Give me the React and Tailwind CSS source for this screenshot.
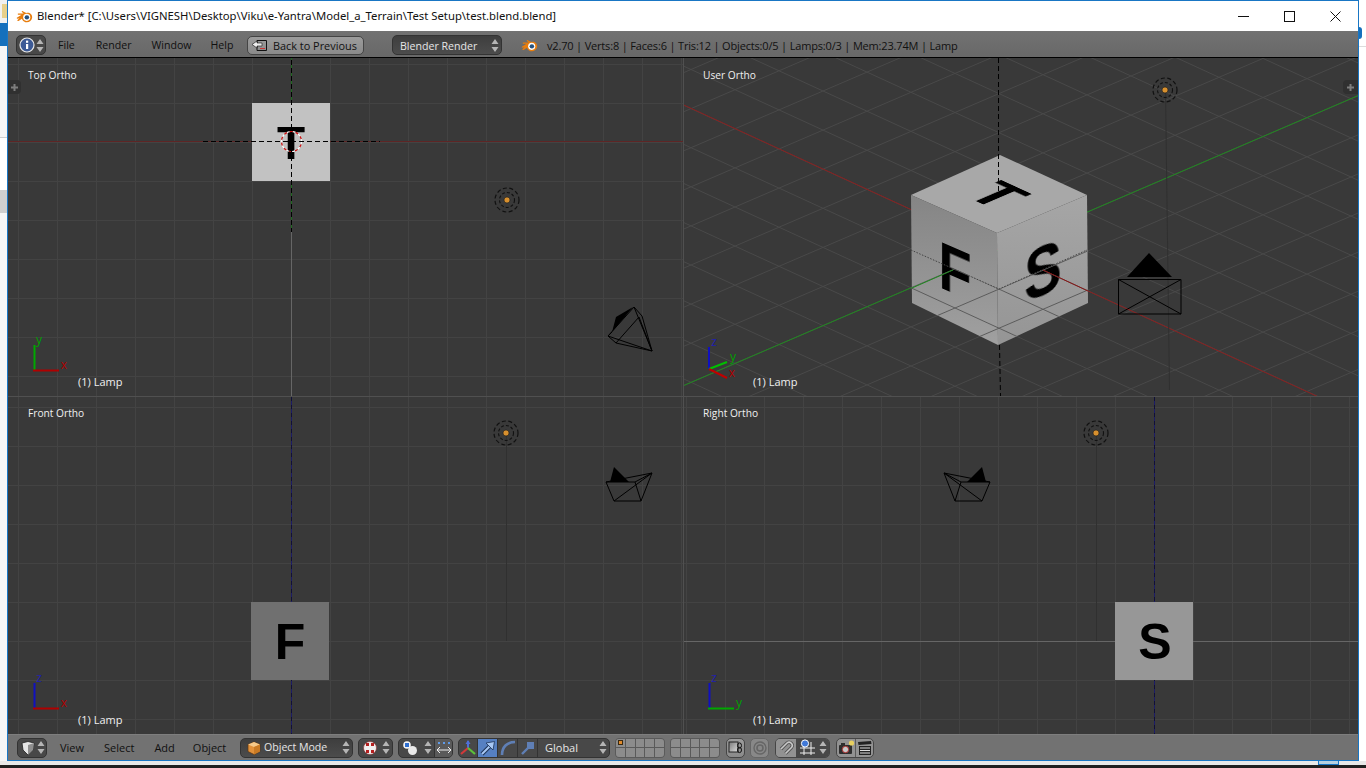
import React from "react";

const uiFont = { fontFamily: '"Open Sans", "Noto Sans", sans-serif' };

function UpDown({ color = "#b5b5b5" }) {
  return (
    <svg width="8" height="15" viewBox="0 0 8 15" className="shrink-0">
      <path d="M4 1 L7.5 6 H0.5 Z M4 14 L7.5 9 H0.5 Z" fill={color} />
    </svg>
  );
}

function BlenderLogo({ size = 16 }) {
  return (
    <svg width={size} height={size} viewBox="0 0 20 20" className="shrink-0">
      <path
        d="M1 11.5 L6.5 7.8 L2.5 7.8 C1.7 7.6 1.8 6.6 2.6 6.5 L9 6.4 L7 4.8 C6.4 4 7.2 3.2 8 3.7 L12 6 C15.5 4.8 19.5 7.5 19 11.5 C18.5 16 13 18.2 9.5 15.8 C8.2 15 7.3 13.8 7 12.6 L3 15.2 C2.2 15.8 1.2 15 1.8 14.2 L4 12.2 L1.8 12.6 C1 12.8 0.6 12 1 11.5 Z"
        fill="#e87d0d"
      />
      <circle cx="12.6" cy="11" r="4.2" fill="#fff" />
      <circle cx="12.8" cy="11" r="2.6" fill="#26527f" />
    </svg>
  );
}

function InfoIcon() {
  return (
    <svg width="16" height="16" viewBox="0 0 16 16" className="shrink-0">
      <circle cx="8" cy="8" r="7" fill="#3c5a96" stroke="#e8e8e8" strokeWidth="1.2" />
      <rect x="7" y="7" width="2.2" height="5" fill="#fff" />
      <rect x="7" y="3.6" width="2.2" height="2.2" fill="#fff" />
    </svg>
  );
}

function ViewCubeIcon() {
  return (
    <svg width="16" height="16" viewBox="0 0 16 16" className="shrink-0">
      <path d="M2 3 L8 1.5 L14 3 L13 10 L8 15 L3 10 Z" fill="#e6e6e6" stroke="#222" strokeWidth="0.8" />
      <path d="M8 5 L14 3 L13 10 L8 15 Z" fill="#8f8f8f" />
    </svg>
  );
}

function ObjectIcon() {
  return (
    <svg width="14" height="14" viewBox="0 0 14 14" className="shrink-0">
      <path d="M7 1 L13 3.5 V10.5 L7 13.5 L1 10.5 V3.5 Z" fill="#e2913a" stroke="#5b3510" strokeWidth="0.7" />
      <path d="M1 3.5 L7 6 L13 3.5 L7 1 Z" fill="#f5c98a" />
      <path d="M7 6 V13.5 L13 10.5 V3.5 Z" fill="#c97a24" />
    </svg>
  );
}

function ShadingIcon() {
  return (
    <svg width="14" height="14" viewBox="0 0 14 14" className="shrink-0">
      <circle cx="7" cy="7" r="6.5" fill="#f0f0f0" />
      <path d="M3 2 H6 V5 H3 Z M8 2 H11 V5 H8 Z M3 9 H6 V12 H3 Z M8 9 H11 V12 H8 Z" fill="#b51f1f" />
      <circle cx="7" cy="7" r="6.5" fill="none" stroke="#8a2a2a" strokeWidth="0.6" />
    </svg>
  );
}

function PivotIcon() {
  return (
    <svg width="16" height="16" viewBox="0 0 16 16" className="shrink-0">
      <circle cx="10.5" cy="10.5" r="4.5" fill="#eaeaea" />
      <circle cx="5" cy="5" r="3.8" fill="#f4f4f4" />
      <rect x="3" y="3" width="4" height="4" fill="#2f6fd0" />
    </svg>
  );
}

function ManipAxes() {
  return (
    <svg width="18" height="18" viewBox="0 0 18 18">
      <path d="M9 9 V2" stroke="#4f6fd8" strokeWidth="2" />
      <path d="M9 9 L2 15" stroke="#d13a3a" strokeWidth="2.2" />
      <path d="M9 9 L16 15" stroke="#5cc23a" strokeWidth="2.2" />
      <path d="M9 1 L6.5 5 H11.5 Z" fill="#4f6fd8" />
    </svg>
  );
}

function ManipMove() {
  return (
    <svg width="18" height="18" viewBox="0 0 18 18">
      <path d="M3 15 L11 7" stroke="#1d3358" strokeWidth="4" />
      <path d="M3 15 L11 7" stroke="#a8c8f5" strokeWidth="2" />
      <path d="M15.5 2.5 L14 11 L7 4 Z" fill="#a8c8f5" stroke="#1d3358" strokeWidth="0.8" />
    </svg>
  );
}

function ManipRotate() {
  return (
    <svg width="18" height="18" viewBox="0 0 18 18">
      <path d="M3 16 C3 8 8 3 16 3" stroke="#5f7fb5" strokeWidth="2.6" fill="none" />
    </svg>
  );
}

function ManipScale() {
  return (
    <svg width="18" height="18" viewBox="0 0 18 18">
      <path d="M3 15 L10 8" stroke="#5f7fb5" strokeWidth="2.4" />
      <rect x="8" y="3" width="7" height="7" fill="#5f7fb5" />
    </svg>
  );
}

function MenuItems({ items, width, textClass }) {
  return (
    <div className={`flex items-center h-full ${width}`}>
      {items.map((m) => (
        <span key={m.t} className={`${textClass} text-[#101010] leading-none ${m.ml}`}>
          {m.t}
        </span>
      ))}
    </div>
  );
}

function LayerBlock({ active }) {
  return (
    <div className="w-[50px] h-[20px] grid grid-cols-5 grid-rows-2 rounded-[4px] overflow-hidden border border-[#5a5a5a] bg-[#5a5a5a] gap-px">
      {Array.from({ length: 10 }).map((_, i) => (
        <div key={i} className="bg-[#8c8c8c] flex items-center justify-center">
          {active && i === 0 && <div className="w-[5px] h-[5px] bg-[#e08a2c] border border-[#3a2a10]" />}
        </div>
      ))}
    </div>
  );
}

function TitleBar() {
  return (
    <div className="h-[30px] bg-white flex items-center shrink-0">
      <div className="ml-[8px] w-[21px]">
        <BlenderLogo size={17} />
      </div>
      <span className="text-[11.3px] text-[#111] whitespace-nowrap" style={{ fontFamily: '"Noto Sans", sans-serif' }}>
        {"Blender* [C:\\Users\\VIGNESH\\Desktop\\Viku\\e-Yantra\\Model_a_Terrain\\Test Setup\\test.blend.blend]"}
      </span>
      <div className="ml-auto flex items-center mr-[17px]">
        <svg width="11" height="11" viewBox="0 0 11 11">
          <path d="M0 5.5 H11" stroke="#111" strokeWidth="1" />
        </svg>
        <svg width="11" height="11" viewBox="0 0 11 11" className="ml-[35px]">
          <rect x="0.5" y="0.5" width="10" height="10" fill="none" stroke="#111" />
        </svg>
        <svg width="11" height="11" viewBox="0 0 11 11" className="ml-[35px]">
          <path d="M0.5 0.5 L10.5 10.5 M10.5 0.5 L0.5 10.5" stroke="#111" strokeWidth="1" />
        </svg>
      </div>
    </div>
  );
}

function TopHeader() {
  return (
    <div className="h-[27px] shrink-0 bg-linear-to-b from-[#727272] to-[#686868] border-b border-black flex items-center pl-[8px] pt-[2px]">
      <div className="w-[30px] h-[20px] rounded-[5px] bg-[#484848] border border-[#333] flex items-center justify-center gap-px">
        <InfoIcon />
        <UpDown />
      </div>
      <MenuItems
        width="w-[201px]"
        textClass="text-[10.6px]"
        items={[
          { t: "File", ml: "ml-[12px]" },
          { t: "Render", ml: "ml-[21px]" },
          { t: "Window", ml: "ml-[20px]" },
          { t: "Help", ml: "ml-[19px]" },
        ]}
      />
      <div className="w-[117px] h-[19px] rounded-[5px] border border-[#454545] bg-linear-to-b from-[#9c9c9c] to-[#8a8a8a] flex items-center pl-[3px] gap-[5px]">
        <svg width="17" height="13" viewBox="0 0 17 13">
          <path d="M6 1.5 H15.5 V11.5 H6 Z" fill="none" stroke="#111" />
          <path d="M1 5.5 L6 2 V4 H11 V7 H6 V9 Z" fill="#eee" stroke="#111" strokeWidth="0.6" />
          <path d="M9 9.5 H14" stroke="#c33" />
        </svg>
        <span className="text-[10.9px] text-[#111] leading-none pt-[2px]">Back to Previous</span>
      </div>
      <div className="ml-[28px] w-[110px] h-[20px] rounded-[5px] bg-linear-to-b from-[#3e3e3e] to-[#4c4c4c] border border-[#333] flex items-center pl-[7px] pr-[2px]">
        <span className="text-[10.6px] text-[#e6e6e6] leading-none pt-[2px]">Blender Render</span>
        <div className="ml-auto">
          <UpDown />
        </div>
      </div>
      <div className="ml-[19px]">
        <BlenderLogo size={17} />
      </div>
      <span className="ml-[9px] text-[11px] tracking-[-0.17px] text-[#111] leading-none whitespace-nowrap">
        v2.70 | Verts:8 | Faces:6 | Tris:12 | Objects:0/5 | Lamps:0/3 | Mem:23.74M | Lamp
      </span>
    </div>
  );
}

function BottomHeader() {
  return (
    <div className="h-[26px] shrink-0 bg-[#727272] border-t border-[#7e7e7e] flex items-center pl-[9px]">
      <div className="w-[30px] h-[20px] rounded-[5px] bg-[#484848] border border-[#333] flex items-center justify-center gap-px">
        <ViewCubeIcon />
        <UpDown />
      </div>
      <MenuItems
        width="w-[193px]"
        textClass="text-[11px]"
        items={[
          { t: "View", ml: "ml-[13px]" },
          { t: "Select", ml: "ml-[20px]" },
          { t: "Add", ml: "ml-[20px]" },
          { t: "Object", ml: "ml-[18px]" },
        ]}
      />
      <div className="w-[113px] h-[20px] rounded-[5px] bg-linear-to-b from-[#3e3e3e] to-[#4c4c4c] border border-[#333] flex items-center pl-[6px] pr-[2px]">
        <ObjectIcon />
        <span className="ml-[3px] text-[10.6px] text-[#e6e6e6] leading-none">Object Mode</span>
        <div className="ml-auto">
          <UpDown />
        </div>
      </div>
      <div className="ml-[5px] w-[35px] h-[20px] rounded-[5px] bg-[#484848] border border-[#333] flex items-center pl-[4px] pr-[2px]">
        <ShadingIcon />
        <div className="ml-auto">
          <UpDown />
        </div>
      </div>
      <div className="ml-[5px] w-[55px] h-[20px] rounded-[5px] bg-[#484848] border border-[#333] flex items-center overflow-hidden">
        <div className="w-[35px] flex items-center pl-[3px] pr-[2px]">
          <PivotIcon />
          <div className="ml-auto">
            <UpDown />
          </div>
        </div>
        <div className="flex-1 h-full bg-[#5a5a5a] border-l border-[#333] flex items-center justify-center">
          <svg width="16" height="16" viewBox="0 0 16 16">
            <path d="M2 3 H4 M7 3 H9 M12 3 H14" stroke="#5f9be8" strokeWidth="2" />
            <path d="M1 10 H15 M1 10 L4 7 M1 10 L4 13 M15 10 L12 7 M15 10 L12 13" stroke="#eee" fill="none" />
          </svg>
        </div>
      </div>
      <div className="ml-[5px] w-[152px] h-[20px] rounded-[5px] bg-[#484848] border border-[#333] flex items-center overflow-hidden">
        <div className="w-[19px] h-full flex items-center justify-center border-r border-[#333]">
          <ManipAxes />
        </div>
        <div className="w-[20px] h-full bg-[#5680c2] flex items-center justify-center border-r border-[#333]">
          <ManipMove />
        </div>
        <div className="w-[20px] h-full flex items-center justify-center border-r border-[#333]">
          <ManipRotate />
        </div>
        <div className="w-[20px] h-full flex items-center justify-center border-r border-[#333]">
          <ManipScale />
        </div>
        <span className="ml-[7px] text-[11px] text-[#e6e6e6] leading-none">Global</span>
        <div className="ml-auto mr-[2px]">
          <UpDown />
        </div>
      </div>
      <div className="ml-[5px]">
        <LayerBlock active />
      </div>
      <div className="ml-[5px]">
        <LayerBlock />
      </div>
      <div className="ml-[6px] w-[19px] h-[20px] rounded-[5px] bg-linear-to-b from-[#9c9c9c] to-[#8a8a8a] border border-[#454545] flex items-center justify-center">
        <svg width="15" height="15" viewBox="0 0 15 15">
          <defs>
            <linearGradient id="lockSq" x1="0" y1="0" x2="1" y2="1">
              <stop offset="0" stopColor="#7a7a7a" />
              <stop offset="1" stopColor="#dcdcdc" />
            </linearGradient>
          </defs>
          <rect x="1" y="2" width="9" height="10" fill="url(#lockSq)" stroke="#222" />
          <ellipse cx="11.5" cy="5.5" rx="2" ry="2.6" fill="none" stroke="#111" strokeWidth="1" />
          <ellipse cx="11.5" cy="10" rx="2" ry="2.6" fill="none" stroke="#111" strokeWidth="1" />
        </svg>
      </div>
      <div className="ml-[5px] w-[19px] h-[20px] rounded-[5px] bg-[#888] border border-[#666] flex items-center justify-center">
        <svg width="14" height="14" viewBox="0 0 14 14">
          <circle cx="7" cy="7" r="6" fill="none" stroke="#666" strokeWidth="1.4" />
          <circle cx="7" cy="7" r="3" fill="none" stroke="#666" strokeWidth="1.6" />
        </svg>
      </div>
      <div className="ml-[6px] w-[55px] h-[20px] rounded-[5px] border border-[#454545] flex items-center overflow-hidden">
        <div className="w-[20px] h-full bg-[#929292] flex items-center justify-center">
          <svg width="15" height="15" viewBox="0 0 15 15">
            <path d="M2 9 L8 3 A3.2 3.2 0 0 1 12.5 7.5 L6.5 13.5" fill="none" stroke="#555" strokeWidth="3.4" />
            <path d="M2 9 L8 3 A3.2 3.2 0 0 1 12.5 7.5 L6.5 13.5" fill="none" stroke="#c9c9c9" strokeWidth="1.6" />
          </svg>
        </div>
        <div className="flex-1 h-full bg-[#484848] flex items-center pl-[3px] pr-[2px]">
          <svg width="17" height="17" viewBox="0 0 17 17">
            <path d="M5 5 V16 M12 3 V16 M1 9 H16 M1 14 H16" stroke="#eee" />
            <circle cx="6" cy="4.5" r="3.6" fill="#3f78d8" stroke="#fff" />
          </svg>
          <div className="ml-auto">
            <UpDown />
          </div>
        </div>
      </div>
      <div className="ml-[6px] w-[38px] h-[20px] rounded-[5px] bg-[#929292] border border-[#454545] flex items-center overflow-hidden">
        <div className="w-[19px] h-full flex items-center justify-center border-r border-[#5a5a5a]">
          <svg width="17" height="16" viewBox="0 0 17 16">
            <rect x="1" y="5" width="13" height="9" rx="1" fill="#2e2e2e" />
            <rect x="3" y="3" width="4" height="2" fill="#2e2e2e" />
            <circle cx="7.5" cy="9.5" r="3.2" fill="#c9c9c9" stroke="#b03030" />
            <circle cx="13.5" cy="3" r="2.6" fill="#e8d060" />
          </svg>
        </div>
        <div className="flex-1 h-full flex items-center justify-center">
          <svg width="16" height="16" viewBox="0 0 16 16">
            <path d="M1 2 L14 1 L14.5 4 L1.5 5 Z" fill="#222" />
            <rect x="2" y="6" width="12" height="9" fill="#222" />
            <path d="M3 8 H13 M3 10.5 H13 M3 13 H13" stroke="#ddd" />
          </svg>
        </div>
      </div>
    </div>
  );
}

// viewport drawings, all coords are screen coords via the viewBox

function OrthoGrid({ cx, cy, x0, x1, y0, y1 }) {
  const lines = [];
  for (let x = cx - 39 * 20; x <= x1; x += 39) {
    if (x >= x0 && x !== cx) lines.push(<line key={"v" + x} x1={x + 0.5} x2={x + 0.5} y1={y0} y2={y1} stroke="#434343" />);
  }
  for (let y = cy - 39 * 20; y <= y1; y += 39) {
    if (y >= y0) lines.push(<line key={"h" + y} y1={y + 0.5} y2={y + 0.5} x1={x0} x2={x1} stroke="#434343" />);
  }
  return <g>{lines}</g>;
}

const R = [44, 20.2];
const G = [44, -18.9];
const O = [999, 250];

function UserGrid({ stroke = "#494949" }) {
  const lines = [];
  for (let k = -24; k <= 24; k++) {
    const a = [O[0] + G[0] * k, O[1] + G[1] * k];
    lines.push(
      <line key={"r" + k} x1={a[0] - R[0] * 30} y1={a[1] - R[1] * 30} x2={a[0] + R[0] * 30} y2={a[1] + R[1] * 30} stroke={stroke} />
    );
    const b = [O[0] + R[0] * k, O[1] + R[1] * k];
    lines.push(
      <line key={"g" + k} x1={b[0] - G[0] * 30} y1={b[1] - G[1] * 30} x2={b[0] + G[0] * 30} y2={b[1] + G[1] * 30} stroke={stroke} />
    );
  }
  return <g>{lines}</g>;
}

function Lamp({ x, y, lineTo }) {
  return (
    <g>
      {lineTo && <line x1={x + 0.5} y1={y} x2={lineTo[0] + 0.5} y2={lineTo[1]} stroke="#303030" />}
      <circle cx={x} cy={y} r="12" fill="none" stroke="#111" strokeWidth="1.2" strokeDasharray="4 2.5" />
      <circle cx={x} cy={y} r="7.5" fill="none" stroke="#111" strokeWidth="1.1" strokeDasharray="3 2" />
      <circle cx={x} cy={y} r="3" fill="#d8902e" stroke="#1a1a1a" strokeWidth="0.6" />
    </g>
  );
}

function Poly({ pts }) {
  return <path d={pts} fill="none" stroke="#000" strokeWidth="1" />;
}

function AxisLabel({ x, y, c, t }) {
  return (
    <text x={x} y={y} fill={c} fontSize="12" style={uiFont} textAnchor="middle">
      {t}
    </text>
  );
}

function Letter({ x, y, size = 50, children, transform }) {
  return (
    <text
      x={x}
      y={y}
      transform={transform}
      fontSize={size}
      fontWeight="700"
      fill="#000"
      textAnchor="middle"
      filter="url(#soft)"
      style={{ fontFamily: '"Liberation Sans", Arial, sans-serif' }}
    >
      {children}
    </text>
  );
}

function Defs() {
  return (
    <defs>
      <filter id="soft">
        <feGaussianBlur stdDeviation="0.5" />
      </filter>
      <linearGradient id="faceL" x1="0" y1="0" x2="0" y2="1">
        <stop offset="0" stopColor="#858585" />
        <stop offset="1" stopColor="#a0a0a0" />
      </linearGradient>
      <linearGradient id="faceR" x1="0" y1="0" x2="0" y2="1">
        <stop offset="0" stopColor="#a6a6a6" />
        <stop offset="1" stopColor="#959595" />
      </linearGradient>
      <clipPath id="cubeFront">
        <polygon points="911,250 999,289 1087,250 1088,303 998,345 912,303" />
      </clipPath>
    </defs>
  );
}

function Pane({ box, label, labelClass, lampX, children }) {
  const [x, y, w, h] = box;
  return (
    <div className="relative overflow-hidden bg-[#393939]">
      <svg className="absolute inset-0" width={w} height={h} viewBox={`${x} ${y} ${w} ${h}`}>
        <Defs />
        {children}
      </svg>
      <span className={`absolute text-[10.2px] leading-[12px] text-[#f0f0f0] ${labelClass}`}>{label}</span>
      <span className="absolute bottom-[8px] text-[11px] leading-[12px] text-[#f0f0f0]" style={{ left: lampX }}>
        (1) Lamp
      </span>
    </div>
  );
}

function PlusTab({ side }) {
  return (
    <div
      className={
        side === "left"
          ? "absolute left-0 top-[22px] w-[13px] h-[14px] rounded-r-[4px] bg-[#303030] flex items-center justify-center"
          : "absolute right-0 top-[22px] w-[15px] h-[14px] rounded-l-[4px] bg-[#303030] flex items-center justify-center"
      }
    >
      <svg width="7" height="7" viewBox="0 0 7 7">
        <path d="M3.5 0 V7 M0 3.5 H7" stroke="#7d7d7d" strokeWidth="2" />
      </svg>
    </div>
  );
}

function TopPane() {
  return (
    <Pane box={[8, 58, 675, 338]} label="Top Ortho" labelClass="left-[20px] top-[11px]" lampX={70}>
      <OrthoGrid cx={291} cy={142} x0={8} x1={683} y0={58} y1={396} />
      <line x1="8" x2="683" y1="141.5" y2="141.5" stroke="#5e2525" />
      <line x1="291.5" x2="291.5" y1="58" y2="232" stroke="#1f6a1f" />
      <line x1="291.5" x2="291.5" y1="232" y2="396" stroke="#666" />
      <rect x="252" y="103" width="78" height="78" fill="#c2c2c2" />
      <Letter x={291} y={159} size={46}>T</Letter>
      <circle cx="291.5" cy="141.5" r="10" fill="none" stroke="#fff" strokeWidth="1.2" strokeDasharray="3 3" />
      <circle cx="291.5" cy="141.5" r="10" fill="none" stroke="#d01010" strokeWidth="1.2" strokeDasharray="3 3" strokeDashoffset="3" />
      <line x1="203" x2="380" y1="141.5" y2="141.5" stroke="#000" strokeDasharray="5 3" />
      <line x1="291.5" x2="291.5" y1="60" y2="232" stroke="#000" strokeDasharray="5 3" />
      <Lamp x={507} y={200} />
      <path d="M612 332 L616 317 L633 307 Z" fill="#000" />
      <Poly pts="M608 336 L634 307 L652 351 Z M608 336 L616 343 L652 351 M634 307 L642 316 L652 351 M639 317 L616 343 M639 317 L652 351 M612 332 L608 336" />
      <path d="M34.5 345 V370" stroke="#00a800" strokeWidth="2" />
      <path d="M33 370.5 H59" stroke="#b00000" strokeWidth="2" />
      <AxisLabel x={39} y={344} c="#00a000" t="y" />
      <AxisLabel x={64} y={369} c="#b00000" t="x" />
    </Pane>
  );
}

function UserPane() {
  const rx = (x) => O[1] + (x - O[0]) * 0.46;
  const gx = (x) => O[1] - (x - O[0]) * 0.43;
  return (
    <Pane box={[684, 58, 674, 338]} label="User Ortho" labelClass="left-[19px] top-[11px]" lampX={69}>
      <UserGrid />
      <line x1="684" y1={rx(684)} x2="1358" y2={rx(1358)} stroke="#8a1f1f" />
      <line x1="684" y1={gx(684)} x2="1358" y2={gx(1358)} stroke="#1f8a1f" />
      <polygon points="1000,155 1087,195 997,233 911,195" fill="#a8a8a8" />
      <polygon points="911,195 997,233 998,345 912,303" fill="url(#faceL)" />
      <polygon points="997,233 1087,195 1088,303 998,345" fill="url(#faceR)" />
      <Letter x={0} y={17} size={46} transform="matrix(1.128 0.518 -1.128 0.485 999 194.5)">T</Letter>
      <Letter x={0} y={18} size={48} transform="matrix(1.128 0.49 0 1.4 955 269)">F</Letter>
      <Letter x={0} y={18} transform="matrix(1.128 -0.49 0 1.4 1043 270)">S</Letter>
      <g clipPath="url(#cubeFront)">
        <UserGrid stroke="#5c5c5c" />
      </g>
      <path d="M911 250 L999 289 L1087 250" fill="none" stroke="#444" strokeDasharray="1.5 1.5" />
      <line x1="953" y1="270" x2="912" y2="288" stroke="#1f8a1f" />
      <line x1="1043" y1="270" x2="1088" y2="291" stroke="#8a1515" />
      <line x1="998.5" x2="998.5" y1="58" y2="192" stroke="#000" strokeDasharray="5 3" />
      <line x1="999.5" x2="1000.5" y1="345" y2="396" stroke="#000" strokeDasharray="5 3" />
      <Lamp x={1165} y={90} lineTo={[1169, 390]} />
      <path d="M1127 277 L1149 253 L1172 277 Z" fill="#000" />
      <path d="M1118.5 279.5 H1181 V314 H1118.5 Z M1118.5 279.5 L1181 314 M1181 279.5 L1118.5 314" fill="none" stroke="#000" />
      <path d="M709 369 V347" stroke="#1010c0" strokeWidth="2" />
      <path d="M709 369 L727 362" stroke="#00c000" strokeWidth="2" />
      <path d="M709 369 L727 378" stroke="#c00000" strokeWidth="2" />
      <AxisLabel x={714} y={346} c="#2020b0" t="z" />
      <AxisLabel x={733} y={361} c="#00a000" t="y" />
      <AxisLabel x={732} y={377} c="#b00000" t="x" />
    </Pane>
  );
}

function FrontPane() {
  return (
    <Pane box={[8, 397, 675, 337]} label="Front Ortho" labelClass="left-[20px] top-[10px]" lampX={70}>
      <OrthoGrid cx={291} cy={641} x0={8} x1={683} y0={397} y1={734} />
      <rect x="291" y="397" width="1" height="337" fill="#1c1c66" />
      <line x1="291.5" x2="291.5" y1="397" y2="734" stroke="#101038" strokeDasharray="4 4" />
      <rect x="251" y="602" width="78" height="78" fill="#707070" />
      <Letter x={290} y={659}>F</Letter>
      <Lamp x={506} y={433} lineTo={[506, 641]} />
      <path d="M614 467 L610 482 L629 482 Z" fill="#000" />
      <Poly pts="M606 482 L652 473 L641 501 H614 Z M606 482 H635 L641 501 M635 482 L652 473 M614 501 L652 473" />
      <path d="M34.5 683 V708" stroke="#1010c0" strokeWidth="2" />
      <path d="M33 708.5 H59" stroke="#b00000" strokeWidth="2" />
      <AxisLabel x={39} y={682} c="#2020b0" t="z" />
      <AxisLabel x={64} y={707} c="#b00000" t="x" />
    </Pane>
  );
}

function RightPane() {
  return (
    <Pane box={[684, 397, 674, 337]} label="Right Ortho" labelClass="left-[19px] top-[10px]" lampX={69}>
      <OrthoGrid cx={1154} cy={641} x0={684} x1={1358} y0={397} y1={734} />
      <line x1="684" x2="1358" y1="641.5" y2="641.5" stroke="#666" />
      <rect x="1154" y="397" width="1" height="337" fill="#1c1c66" />
      <line x1="1154.5" x2="1154.5" y1="397" y2="734" stroke="#101038" strokeDasharray="4 4" />
      <rect x="1115" y="602" width="78" height="78" fill="#979797" />
      <Letter x={1155} y={659}>S</Letter>
      <Lamp x={1096} y={433} lineTo={[1096, 641]} />
      <path d="M982 467 L986 482 L967 482 Z" fill="#000" />
      <Poly pts="M990 482 L944 473 L955 501 H982 Z M990 482 H961 L955 501 M961 482 L944 473 M982 501 L944 473" />
      <path d="M709.5 683 V708" stroke="#1010c0" strokeWidth="2" />
      <path d="M708 708.5 H734" stroke="#00a800" strokeWidth="2" />
      <AxisLabel x={714} y={682} c="#2020b0" t="z" />
      <AxisLabel x={739} y={707} c="#00a000" t="y" />
    </Pane>
  );
}

function Viewports() {
  return (
    <div className="relative flex-1 grid grid-cols-[675px_674px] grid-rows-[338px_337px] gap-px bg-[#505050] min-h-0">
      <TopPane />
      <UserPane />
      <FrontPane />
      <RightPane />
      <PlusTab side="left" />
      <PlusTab side="right" />
    </div>
  );
}

export default function App() {
  return (
    <div className="w-[1366px] h-[768px] overflow-hidden flex flex-col bg-[#f5f5f5]" style={uiFont}>
      <div className="h-[761px] flex shrink-0">
        <div className="w-[7px] flex flex-col shrink-0">
          <div className="h-[23px] bg-[#f0f0f0] pt-[4px] pl-[2px]">
            <div className="h-[14px] bg-[#e8d08a]" />
          </div>
          <div className="h-[23px] bg-[#1570bd]" />
          <div className="h-[92px] border-b border-[#cfcfcf] bg-[#f6f6f6]" />
          <div className="h-[52px] bg-white" />
          <div className="h-[23px] bg-[#cfcfcf]" />
          <div className="flex-1 bg-[#f6f6f6]" />
        </div>
        <div className="w-[1352px] shrink-0 flex flex-col border border-[#1976c4]">
          <TitleBar />
          <TopHeader />
          <Viewports />
          <BottomHeader />
        </div>
        <div className="flex-1 flex flex-col bg-white">
          <div className="h-[27px]" />
          <div className="h-[12px] w-[3px] rounded-r-full bg-[#1570bd]" />
          <div className="h-[7px]" />
          <div className="h-px bg-[#dcdcdc]" />
        </div>
      </div>
      <div className="h-[4px] shrink-0 bg-[#e8e8e8] flex justify-end pr-[27px]">
        <div className="w-[21px] h-full bg-[#b6d0e0] border-x border-b border-[#1976c4]" />
      </div>
      <div className="flex-1 bg-[#1f1f1f]" />
    </div>
  );
}
